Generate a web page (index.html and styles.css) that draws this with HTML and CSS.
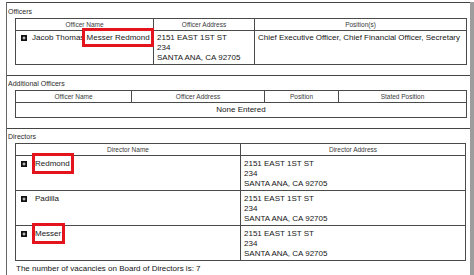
FILE: index.html
```html
<!DOCTYPE html>
<html>
<head>
<meta charset="utf-8">
<link rel="stylesheet" href="styles.css">
</head>
<body>
<div class="page">
  <section class="sec sec-first">
    <div class="label">Officers</div>
    <table class="grid officers">
      <colgroup><col class="o1"><col class="o2"><col class="o3"></colgroup>
      <thead><tr><th>Officer Name</th><th>Officer Address</th><th>Position(s)</th></tr></thead>
      <tbody>
        <tr>
          <td class="name"><span class="ico"><svg viewBox="0 0 6 6" width="6" height="6"><path d="M3 1.5v3M1.5 3h3" stroke="#fff" stroke-width="0.9"/></svg></span>Jacob Thomas <span class="mark mark-o">Messer Redmond</span></td>
          <td>2151 EAST 1ST ST<br>234<br>SANTA ANA, CA 92705</td>
          <td>Chief Executive Officer, Chief Financial Officer, Secretary</td>
        </tr>
      </tbody>
    </table>
  </section>
  <section class="sec">
    <div class="label">Additional Officers</div>
    <table class="grid additional">
      <colgroup><col class="a1"><col class="a2"><col class="a3"><col class="a4"></colgroup>
      <thead><tr><th>Officer Name</th><th>Officer Address</th><th>Position</th><th>Stated Position</th></tr></thead>
      <tbody><tr><td colspan="4" class="none">None Entered</td></tr></tbody>
    </table>
  </section>
  <section class="sec sec-last">
    <div class="label">Directors</div>
    <table class="grid directors">
      <thead><tr><th>Director Name</th><th>Director Address</th></tr></thead>
      <tbody>
        <tr>
          <td class="name dname"><span class="ico"><svg viewBox="0 0 6 6" width="6" height="6"><path d="M3 1.5v3M1.5 3h3" stroke="#fff" stroke-width="0.9"/></svg></span><span class="mark mark-d">Redmond</span></td>
          <td>2151 EAST 1ST ST<br>234<br>SANTA ANA, CA 92705</td>
        </tr>
        <tr>
          <td class="name dname"><span class="ico"><svg viewBox="0 0 6 6" width="6" height="6"><path d="M3 1.5v3M1.5 3h3" stroke="#fff" stroke-width="0.9"/></svg></span>Padilla</td>
          <td>2151 EAST 1ST ST<br>234<br>SANTA ANA, CA 92705</td>
        </tr>
        <tr>
          <td class="name dname"><span class="ico"><svg viewBox="0 0 6 6" width="6" height="6"><path d="M3 1.5v3M1.5 3h3" stroke="#fff" stroke-width="0.9"/></svg></span><span class="mark mark-d">Messer</span></td>
          <td>2151 EAST 1ST ST<br>234<br>SANTA ANA, CA 92705</td>
        </tr>
      </tbody>
    </table>
    <p class="vacancies">The number of vacancies on Board of Directors is: 7</p>
  </section>
</div>
</body>
</html>
```

FILE: styles.css
```css
html, body {
  margin: 0;
  padding: 0;
  background: #fff;
}
body {
  font-family: "Liberation Sans", Arial, sans-serif;
  color: #161616;
}
.page {
  margin: 2px 0 0 6px;
  width: 463px;
  min-height: 273px;
  border-left: 1px solid #666;
  border-right: 4px solid #9d9d9d;
  box-sizing: content-box;
}
.sec {
  border-top: 1px solid #444;
  padding: 0 4px 10px 0;
}
.label {
  font-size: 7px;
  line-height: 11px;
  padding: 2px 0 1px 1px;
  color: #2a2a2a;
}
.sec-first .label {
  padding-top: 3px;
  padding-bottom: 1px;
}
.grid {
  border-collapse: collapse;
  table-layout: fixed;
  width: 451px;
  margin-left: 8px;
}
.grid th, .grid td {
  border: 1px solid #4a4a4a;
}
.grid th {
  font-size: 6.5px;
  font-weight: normal;
  color: #3a3a3a;
  height: 11px;
  padding: 0;
  text-align: center;
}
.grid td {
  font-size: 8px;
  line-height: 10px;
  padding: 2px 3px 1px;
  vertical-align: top;
  text-align: left;
}
.o1 { width: 138px; }
.o2 { width: 101px; }
.o3 { width: 212px; }
.a1 { width: 116px; }
.a2 { width: 133px; }
.a3 { width: 74px; }
.a4 { width: 128px; }
.grid td.none {
  text-align: center;
  height: 11px;
}
.directors th, .directors td {
  width: 50%;
}
.directors td {
  height: 29px;
  padding-top: 3px;
}
.ico {
  display: inline-block;
  width: 6px;
  height: 6px;
  background: #111;
  margin: 0 5px 0 2px;
  vertical-align: -1px;
}
.ico svg {
  display: block;
}
.dname .ico {
  margin-right: 8px;
}
.mark {
  position: relative;
}
.mark::after {
  content: "";
  position: absolute;
  border: 3px solid #e3141b;
}
.mark-o::after {
  left: -5px;
  right: -4px;
  top: -5px;
  bottom: -5px;
}
.mark-d::after {
  left: -3px;
  right: -4px;
  top: -6px;
  bottom: -6px;
}
.vacancies {
  margin: 3px 0 0 9px;
  font-size: 8px;
  line-height: 10px;
}
.sec-last {
  padding-bottom: 0;
}
```
